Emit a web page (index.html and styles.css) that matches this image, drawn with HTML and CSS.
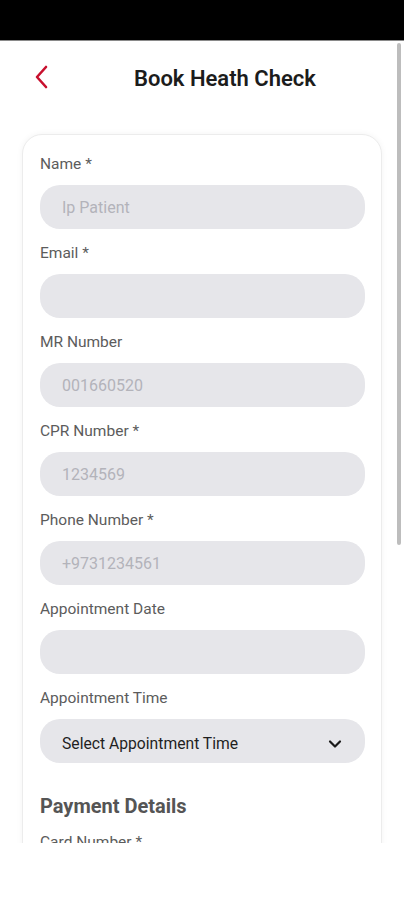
FILE: index.html
```html
<!DOCTYPE html>
<html lang="en">
<head>
    <meta charset="UTF-8">
    <meta name="viewport" content="width=device-width, initial-scale=1.0">
    <title>Book Heath Check</title>
    <link rel="stylesheet" href="styles.css">
</head>
<body>

<div class="statusbar"></div>

<div class="screen">
    <div class="scrollbar"></div>

    <div class="kopfzeile">
        <button class="zurueck" type="button" aria-label="Back">
            <svg width="14" height="24" viewBox="0 0 14 24">
                <path d="M12 2 L3 12 L12 22" fill="none" stroke="#c8102e" stroke-width="2.6" stroke-linecap="round" stroke-linejoin="round"/>
            </svg>
        </button>
        <h1>Book Heath Check</h1>
    </div>

    <form class="formular-karte">
        <label class="feld">
            <span class="feld-label">Name *</span>
            <input type="text" placeholder="Ip Patient" disabled>
        </label>
        <label class="feld">
            <span class="feld-label">Email *</span>
            <input type="email">
        </label>
        <label class="feld">
            <span class="feld-label">MR Number</span>
            <input type="text" placeholder="001660520" disabled>
        </label>
        <label class="feld">
            <span class="feld-label">CPR Number *</span>
            <input type="text" placeholder="1234569" disabled>
        </label>
        <label class="feld">
            <span class="feld-label">Phone Number *</span>
            <input type="text" placeholder="+9731234561" disabled>
        </label>
        <label class="feld">
            <span class="feld-label">Appointment Date</span>
            <input type="text">
        </label>
        <div class="feld">
            <span class="feld-label">Appointment Time</span>
            <div class="auswahl">
                <span>Select Appointment Time</span>
                <svg width="14" height="10" viewBox="0 0 14 10">
                    <path d="M2 2.5 L7 7.5 L12 2.5" fill="none" stroke="#1a1a1a" stroke-width="2.2" stroke-linecap="round" stroke-linejoin="round"/>
                </svg>
            </div>
        </div>

        <h2>Payment Details</h2>
        <label class="feld">
            <span class="feld-label">Card Number *</span>
            <input type="text">
        </label>
    </form>
</div>

<div class="navbereich"></div>

</body>
</html>
```

FILE: styles.css
```css
* {
    box-sizing: border-box;
}

body {
    margin: 0;
    background-color: #ffffff;
    font-family: Roboto, "Liberation Sans", Arial, sans-serif;
}

.statusbar {
    height: 41px;
    background-color: #000000;
    border-bottom: 1px solid #8a8a8a;
}

.screen {
    position: relative;
    height: 802px;
    overflow: hidden;
}

.scrollbar {
    position: absolute;
    top: 2px;
    right: 3px;
    width: 4px;
    height: 502px;
    border-radius: 2px;
    background-color: #bdbdbd;
}

.kopfzeile {
    display: flex;
    align-items: center;
    height: 72px;
    padding-left: 34px;
}

.zurueck {
    display: flex;
    padding: 0;
    background: none;
    border: none;
    cursor: pointer;
}

.kopfzeile h1 {
    margin: 2px 0 0 86px;
    font-size: 22px;
    font-weight: 600;
    color: #1c1c1c;
}

.formular-karte {
    margin: 21px 22px 0 22px;
    padding: 20px 16px 0 17px;
    background-color: #ffffff;
    border: 1px solid #ececec;
    border-radius: 20px;
    box-shadow: 0 0 6px rgba(0,0,0,0.05);
}

.feld {
    display: block;
    margin-bottom: 15px;
}

.feld-label {
    display: block;
    margin-bottom: 12px;
    font-size: 15.5px;
    line-height: 18px;
    color: #5c5c5c;
}

.feld input, .auswahl {
    display: block;
    width: 100%;
    height: 44px;
    padding: 0 22px;
    font-family: inherit;
    font-size: 16px;
    background-color: #e6e6ea;
    border: none;
    border-radius: 20px;
    color: #222222;
}

.feld input::placeholder {
    color: #b3b3ba;
}

.auswahl {
    display: flex;
    align-items: center;
    justify-content: space-between;
    padding-top: 4px;
    padding-right: 23px;
    font-size: 15.7px;
    color: #1f1f1f;
}

.auswahl svg {
    margin-top: 2px;
}

.formular-karte h2 {
    margin: 31px 0 15px 0;
    font-size: 20px;
    line-height: 24px;
    font-weight: 700;
    color: #555555;
}

.navbereich {
    height: 56px;
    background-color: #ffffff;
}
```
